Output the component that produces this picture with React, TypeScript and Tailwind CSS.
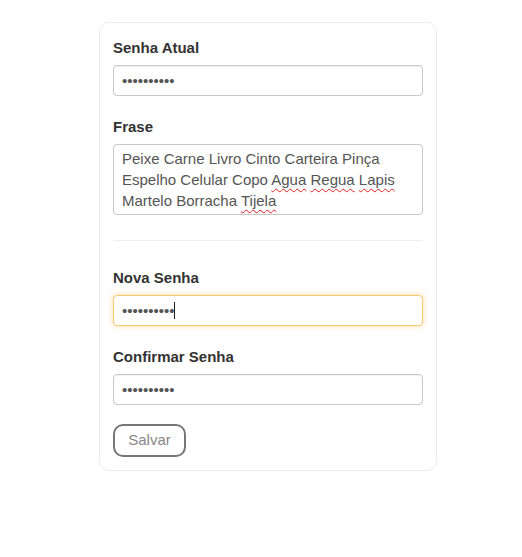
import React from "react";

const font = { fontFamily: '"Liberation Sans", Arial, sans-serif' };

function Label({ children }: { children: React.ReactNode }) {
  return (
    <label className="block text-[15px] font-bold leading-[20px] text-[#333] mb-[7px]">
      {children}
    </label>
  );
}

function Pwd({ focused = false }: { focused?: boolean }) {
  return (
    <div className="relative">
      <input
        type="password"
        readOnly
        value="1234567890"
        className={
          "block w-full h-[31px] rounded-[4px] border bg-white px-2 text-[15px] text-[#555] outline-none " +
          (focused
            ? "border-[#f7c873] shadow-[0_0_6px_rgba(251,191,80,0.55)]"
            : "border-[#c8c8c8] shadow-[inset_0_1px_1px_rgba(0,0,0,0.06)]")
        }
        style={font}
      />
      {focused && (
        <span className="absolute left-[61px] top-[7px] h-[17px] w-px bg-[#222]" />
      )}
    </div>
  );
}

function Bad({ children }: { children: React.ReactNode }) {
  return (
    <span className="underline decoration-wavy decoration-[#e02020] decoration-[1px] underline-offset-[3px]">
      {children}
    </span>
  );
}

export default function App() {
  return (
    <div className="min-h-[557px] w-[522px] bg-white" style={font}>
      <div className="ml-[99px] pt-[22px]">
        <div className="w-[338px] rounded-[10px] border border-[#ececec] bg-white px-[13px] pt-[15px] pb-[13px]">
          <Label>Senha Atual</Label>
          <Pwd />

          <div className="mt-[21px]">
            <Label>Frase</Label>
            <div className="h-[71px] rounded-[4px] border border-[#c8c8c8] px-2 pt-[3px] text-[15px] leading-[21px] text-[#555]">
              Peixe Carne Livro Cinto Carteira Pinça
              <br />
              Espelho Celular Copo <Bad>Agua</Bad> <Bad>Regua</Bad> <Bad>Lapis</Bad>
              <br />
              Martelo Borracha <Bad>Tijela</Bad>
            </div>
          </div>

          <div className="mt-[25px] border-t border-[#eeeeee]" />

          <div className="mt-[27px]">
            <Label>Nova Senha</Label>
            <Pwd focused />
          </div>

          <div className="mt-[21px]">
            <Label>Confirmar Senha</Label>
            <Pwd />
          </div>

          <button
            className="mt-[19px] block h-[33px] w-[73px] rounded-[10px] border-2 border-[#777] bg-white text-[15px] text-[#888]"
            style={font}
          >
            Salvar
          </button>
        </div>
      </div>
    </div>
  );
}
